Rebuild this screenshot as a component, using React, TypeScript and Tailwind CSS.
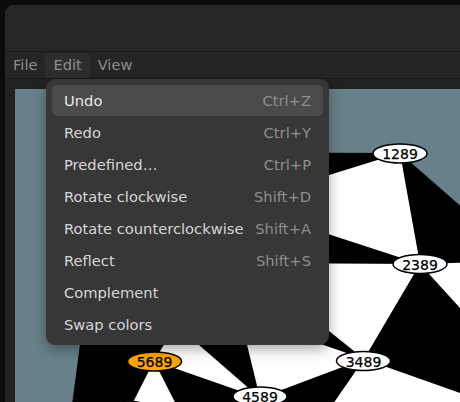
import React from "react";

const items: { label: string; shortcut?: string; active?: boolean }[] = [
  { label: "Undo", shortcut: "Ctrl+Z", active: true },
  { label: "Redo", shortcut: "Ctrl+Y" },
  { label: "Predefined…", shortcut: "Ctrl+P" },
  { label: "Rotate clockwise", shortcut: "Shift+D" },
  { label: "Rotate counterclockwise", shortcut: "Shift+A" },
  { label: "Reflect", shortcut: "Shift+S" },
  { label: "Complement" },
  { label: "Swap colors" },
];

const whiteFaces = [
  "400,153 420,264 236,204",
  "420,264 480,262 480,330",
  "420,264 244,263 364,359",
  "240,316 364,359 260,398",
  "154,361 176,325 260,398",
  "154,361 124,420 184,420",
  "364,359 322,420 480,420 480,400",
];

const nodes: { x: number; y: number; label: string; fill?: string }[] = [
  { x: 400, y: 153.5, label: "1289" },
  { x: 420, y: 264, label: "2389" },
  { x: 363.5, y: 361, label: "3489" },
  { x: 154.5, y: 361.5, label: "5689", fill: "#ffa500" },
  { x: 260, y: 396.5, label: "4589" },
];

function Graph() {
  return (
    <svg width="445" height="313" viewBox="15 89 445 313" className="block">
      <polygon points="100,152 400,153 480,223 480,420 70,420 99,200" fill="#000" />
      {whiteFaces.map((p) => (
        <polygon key={p} points={p} fill="#fff" />
      ))}
      <ellipse cx="128" cy="411" rx="22" ry="10" fill="#5c4a1c" stroke="#000" strokeWidth="1.5" />
      {nodes.map((n) => (
        <g key={n.label}>
          <ellipse
            cx={n.x}
            cy={n.y}
            rx="27"
            ry="9.5"
            fill={n.fill ?? "#fff"}
            stroke="#000"
            strokeWidth="1.5"
          />
          <text
            x={n.x}
            y={n.y + 0.5}
            textAnchor="middle"
            dominantBaseline="central"
            fontSize="14"
            fontFamily="DejaVu Sans, sans-serif"
            fill="#000"
            stroke="#000"
            strokeWidth="0.25"
          >
            {n.label}
          </text>
        </g>
      ))}
    </svg>
  );
}

export default function App() {
  return (
    <div className="relative w-[460px] h-[402px] overflow-hidden bg-[#0b0b0b] pl-[5px] pt-[5px] font-['DejaVu_Sans',sans-serif]">
      <div className="flex h-full flex-col rounded-tl-[9px] bg-[#222222] overflow-hidden">
        {/* title bar */}
        <div className="h-[47px] shrink-0 border-b border-[#1a1a1a] bg-[#262626]" />

        {/* menu bar */}
        <div className="flex h-[27px] shrink-0 items-center border-b border-[#1a1a1a] bg-[#252525] text-[14.6px] text-[#8e8e8e]">
          <div className="flex h-[25px] items-center px-2">File</div>
          <div className="flex h-[25px] items-center rounded-[4px] bg-[#2e2e2e] px-2">Edit</div>
          <div className="flex h-[25px] items-center px-2">View</div>
        </div>

        {/* canvas */}
        <div className="flex-1 pl-[10px] pt-[10px]">
          <div className="h-full w-full overflow-hidden bg-[#688089]">
            <Graph />
          </div>
        </div>
      </div>

      {/* Edit menu */}
      <div className="absolute left-[46px] top-[79px] w-[283px] rounded-[9px] bg-[#373737] px-[6px] pb-[5px] pt-[6px] shadow-[0_4px_14px_rgba(0,0,0,0.35)]">
        <div className="flex flex-col gap-px">
          {items.map((it) => (
            <div
              key={it.label}
              className={
                "flex h-[31px] items-center justify-between rounded-[5px] px-3 pt-[2px] text-[14.7px] " +
                (it.active ? "bg-[#4a4a4a] text-[#e8e8e8]" : "text-[#d6d6d6]")
              }
            >
              <span>{it.label}</span>
              {it.shortcut && <span className="text-[#8e8e8e]">{it.shortcut}</span>}
            </div>
          ))}
        </div>
      </div>
    </div>
  );
}
